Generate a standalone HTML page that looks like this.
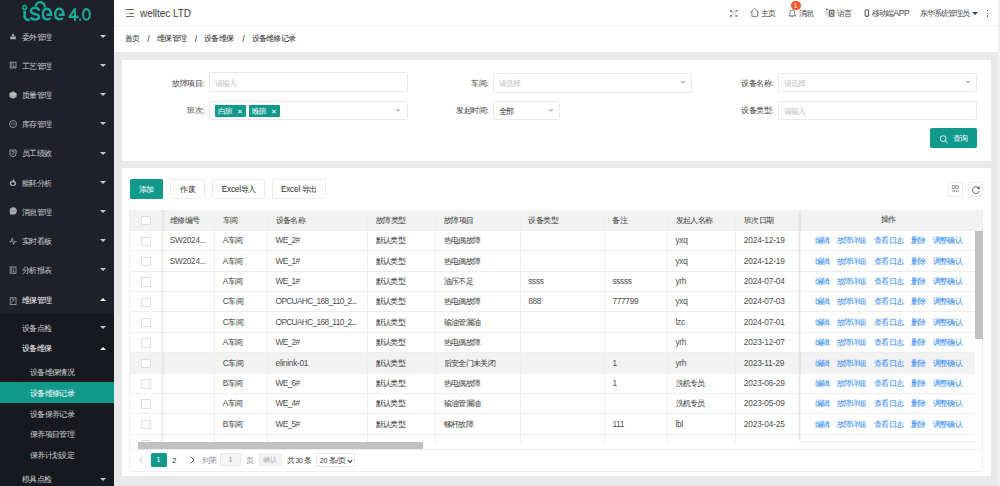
<!DOCTYPE html><html><head><meta charset="utf-8"><style>
*{margin:0;padding:0;box-sizing:border-box}
html,body{width:1000px;height:486px;overflow:hidden;background:#e9e9e9;font-family:"Liberation Sans",sans-serif;color:#606266;position:relative}
.ab{position:absolute;white-space:nowrap}
#side{position:absolute;left:0;top:0;width:114px;height:486px;background:#1e212a;overflow:hidden}
.mi{position:absolute;left:22.2px;font-size:8px;letter-spacing:-0.7px;color:#cdced1;line-height:10px;white-space:nowrap}
.arr{position:absolute;left:100px;width:0;height:0;border-left:3px solid transparent;border-right:3px solid transparent}
.arr.dn{border-top:3.5px solid #c8c9cc}
.arr.up{border-bottom:3.5px solid #fff}
#sub{position:absolute;left:0;top:314px;width:114px;height:172px;background:#18191f}
#header{position:absolute;left:114px;top:0;width:884px;height:26px;background:#fff;border-bottom:1px solid #f3f3f3;border-top-right-radius:3px}
#bread{position:absolute;left:114px;top:26px;width:884px;height:26px;background:#fff}
#rstrip{position:absolute;left:998px;top:0;width:2px;height:486px;background:#efefef}
.card{position:absolute;left:122px;width:868.6px;background:#fff}
.t7{font-size:8px;letter-spacing:-0.7px;line-height:10px}
.inp{position:absolute;height:20px;border:1px solid #e8e8e8;border-radius:1.5px;background:#fff}
.caret{position:absolute;width:0;height:0;border-left:3.5px solid transparent;border-right:3.5px solid transparent;border-top:3.5px solid #c0c4cc}
.tag{position:absolute;top:104.5px;height:12.5px;padding-top:1.2px;background:#11998b;color:#fff;font-size:8px;letter-spacing:-0.7px;line-height:12.5px;border-radius:1px}
.btn{position:absolute;top:179px;height:20px;border:1px solid #ebebeb;border-radius:1.5px;background:#fff;font-size:8px;letter-spacing:-0.7px;color:#303133;line-height:19.5px;text-align:center}
.hl{position:absolute;background:#ebeef5}
.link{color:#2d88f2}
</style></head><body>
<div id="side">
<div id="sub"></div>
<svg class="ab" style="left:0;top:0" width="114" height="24" viewBox="0 0 114 24">
<g fill="none" stroke="#1aaa98" stroke-linecap="butt">
<circle cx="24.7" cy="7.4" r="1.9" stroke-width="1.4"/>
<path d="M24.6 10.4 V16.3 Q24.6 20.1 29.8 20.2" stroke-width="2.6"/>
<path d="M39.2 10.8 C38.8 8.8 37 7.7 35 7.7 C32.6 7.7 30.9 9.1 30.9 11 C30.9 13 33 13.5 35 14 C37.5 14.6 39.1 15.3 39.1 17 C39.1 18.7 37.2 19.5 35 19.5 C33 19.5 31.2 18.7 30.6 17.3" stroke-width="2.45"/>
<path d="M35.6 6.2 A4.5 4.5 0 0 1 44.8 7.4" stroke-width="2.45"/>
<path d="M46.4 14.8 H51.1 C51.1 11 49.5 8.8 46.9 8.8 C44.3 8.8 42.9 11.2 42.9 14.1 C42.9 17.2 44.5 19.4 47.2 19.4 C48.6 19.4 49.7 18.9 50.5 18" stroke-width="2.4"/>
<path d="M58.7 14.8 H63.5 C63.5 11 61.9 8.8 59.3 8.8 C56.7 8.8 55.2 11.2 55.2 14.1 C55.2 17.2 56.8 19.4 59.5 19.4 C60.9 19.4 62 18.9 62.8 18" stroke-width="2.4"/>
<path d="M75 8.3 V20.8 M75 8.8 L69.6 16.5 V16.9 H78.6" stroke-width="2.1"/>
<ellipse cx="86.45" cy="14.45" rx="3.35" ry="5.35" stroke-width="2.1"/>
</g>
<circle cx="80.1" cy="19.7" r="1.15" fill="#1aaa98"/>
</svg>
<div class="mi" style="top:32.6px">委外管理</div>
<div class="arr dn" style="top:34.8px"></div>
<svg class="ab" style="left:9px;top:32.3px" width="8" height="8" viewBox="0 0 8 8"><path d="M1.2 7.3 V4.8 L2.4 4.2 L4 1 L5.6 4 L6.9 4.6 V7.3 Z" fill="#a9aaae"/><circle cx="3.1" cy="4.4" r="0.55" fill="#1e212a"/><circle cx="5.2" cy="4.6" r="0.55" fill="#1e212a"/></svg>
<div class="mi" style="top:61.7px">工艺管理</div>
<div class="arr dn" style="top:63.9px"></div>
<svg class="ab" style="left:9px;top:61.4px" width="8" height="8" viewBox="0 0 8 8"><rect x="1.2" y="1.2" width="5.8" height="5.8" fill="none" stroke="#a9aaae" stroke-width="0.8"/><path d="M2.7 1.5 V6.6 M4.3 1.5 V5.5" stroke="#a9aaae" stroke-width="0.6"/><rect x="4.4" y="5" width="1.3" height="1.3" fill="#a9aaae"/></svg>
<div class="mi" style="top:90.9px">质量管理</div>
<div class="arr dn" style="top:93.1px"></div>
<svg class="ab" style="left:9px;top:90.6px" width="8" height="8" viewBox="0 0 8 8"><path d="M4 0.3 L7.6 2.2 V6 L4 7.8 L0.4 6 V2.2 Z" fill="#a9aaae"/><path d="M0.6 2.4 L4 4.2 L7.4 2.4" fill="none" stroke="#fff" stroke-width="0.6" opacity="0.9"/></svg>
<div class="mi" style="top:120.1px">库存管理</div>
<div class="arr dn" style="top:122.3px"></div>
<svg class="ab" style="left:9px;top:119.8px" width="8" height="8" viewBox="0 0 8 8"><circle cx="4" cy="4" r="3.5" fill="none" stroke="#a9aaae" stroke-width="0.8"/><path d="M2 4.4 L3.3 3.2 L4.6 4.6 L6 3.4" fill="none" stroke="#a9aaae" stroke-width="0.8"/></svg>
<div class="mi" style="top:149.3px">员工绩效</div>
<div class="arr dn" style="top:151.5px"></div>
<svg class="ab" style="left:9px;top:149.0px" width="8" height="8" viewBox="0 0 8 8"><path d="M1 1 H7 V4.8 Q7 7 4 7.8 Q1 7 1 4.8 Z" fill="none" stroke="#a9aaae" stroke-width="0.9"/><path d="M2.6 4.3 L3.7 5.3 L5.5 3.2" fill="none" stroke="#a9aaae" stroke-width="0.8"/><path d="M2.5 2.6 H5.5" stroke="#a9aaae" stroke-width="0.7"/></svg>
<div class="mi" style="top:178.5px">能耗分析</div>
<div class="arr dn" style="top:180.7px"></div>
<svg class="ab" style="left:9px;top:178.2px" width="8" height="8" viewBox="0 0 8 8"><path d="M4.2 0.4 Q4.3 1.8 5.3 2.5 Q7.2 3.8 7.2 5.5 Q7.2 7.9 4 7.9 Q0.8 7.9 0.8 5.5 Q0.8 3.6 2.2 2.6 Q2.4 3.8 3.1 3.4 Q3.6 1.9 4.2 0.4 Z" fill="#a9aaae"/><ellipse cx="4" cy="5.6" rx="1.7" ry="1.4" fill="#1e212a"/></svg>
<div class="mi" style="top:207.7px">消息管理</div>
<div class="arr dn" style="top:209.9px"></div>
<svg class="ab" style="left:9px;top:207.4px" width="8" height="8" viewBox="0 0 8 8"><circle cx="4.2" cy="3.9" r="3.6" fill="#a9aaae"/><path d="M1.3 5.6 L0.8 7.7 L3 6.9 Z" fill="#a9aaae"/><circle cx="2.6" cy="3.9" r="0.45" fill="#55565b"/><circle cx="4.2" cy="3.9" r="0.45" fill="#55565b"/><circle cx="5.8" cy="3.9" r="0.45" fill="#55565b"/></svg>
<div class="mi" style="top:236.9px">实时看板</div>
<div class="arr dn" style="top:239.1px"></div>
<svg class="ab" style="left:9px;top:236.6px" width="8" height="8" viewBox="0 0 8 8"><path d="M0.4 5 H2 L3.3 1.2 L4.6 7.4 L5.6 4.6 H7.6" fill="none" stroke="#a9aaae" stroke-width="0.85" stroke-linejoin="round"/></svg>
<div class="mi" style="top:266.1px">分析报表</div>
<div class="arr dn" style="top:268.3px"></div>
<svg class="ab" style="left:9px;top:265.8px" width="8" height="8" viewBox="0 0 8 8"><rect x="1.2" y="1" width="5.8" height="6.3" fill="none" stroke="#a9aaae" stroke-width="0.8"/><path d="M2.7 1.3 V6.9 M4.3 1.3 V5.7" stroke="#a9aaae" stroke-width="0.6"/><rect x="4.4" y="5.2" width="1.3" height="1.3" fill="#a9aaae"/></svg>
<div class="mi" style="top:295.8px;color:#fff">维保管理</div><div class="arr up" style="top:297.5px"></div>
<svg class="ab" style="left:9px;top:296.5px" width="8" height="8" viewBox="0 0 8 8"><rect x="1.2" y="0.8" width="5.8" height="6.6" fill="none" stroke="#a9aaae" stroke-width="0.8"/><path d="M2.7 2.3 H5.5 M2.5 6 L3 4.8 L5.2 3" stroke="#a9aaae" stroke-width="0.7" fill="none"/></svg>
<div class="mi" style="top:323.5px">设备点检</div><div class="arr dn" style="top:326.2px"></div>
<div class="mi" style="top:344.3px;color:#fff">设备维保</div><div class="arr up" style="top:346.5px"></div>
<div class="ab" style="left:0;top:382.4px;width:114px;height:20.6px;background:#11998b"></div>
<div class="mi" style="left:30px;top:367.8px;color:#cdced1">设备维保情况</div>
<div class="mi" style="left:30px;top:388.5px;color:#fff">设备维修记录</div>
<div class="mi" style="left:30px;top:409.5px;color:#cdced1">设备保养记录</div>
<div class="mi" style="left:30px;top:430.2px;color:#cdced1">保养项目管理</div>
<div class="mi" style="left:30px;top:451.0px;color:#cdced1">保养计划设定</div>
<div class="mi" style="top:475.1px">模具点检</div><div class="arr dn" style="top:477.8px"></div>
</div>
<div id="header"></div>
<div id="bread"></div>
<div id="rstrip"></div>
<div class="ab" style="left:125.5px;top:9px;width:8px;height:1.3px;background:#666"></div>
<div class="ab" style="left:125.5px;top:12.5px;width:1.5px;height:1.3px;background:#666"></div>
<div class="ab" style="left:128.5px;top:12.5px;width:5px;height:1.3px;background:#666"></div>
<div class="ab" style="left:125.5px;top:16px;width:8px;height:1.3px;background:#666"></div>
<div class="ab" style="left:140px;top:7.6px;font-size:10px;line-height:12px;color:#3a3a3a;letter-spacing:-0.05px">welltec LTD</div>
<svg class="ab" style="left:730px;top:9.5px" width="7.5" height="7" viewBox="0 0 7.5 7"><g stroke="#666" stroke-width="0.8" fill="none">
<path d="M0.6 0.6 L2.6 2.6 M0.6 2 V0.6 H2"/><path d="M6.9 0.6 L4.9 2.6 M6.9 2 V0.6 H5.5"/>
<path d="M0.6 6.4 L2.6 4.4 M0.6 5 V6.4 H2"/><path d="M6.9 6.4 L4.9 4.4 M6.9 5 V6.4 H5.5"/></g></svg>
<svg class="ab" style="left:749.8px;top:8.3px" width="9.5" height="9" viewBox="0 0 9.5 9"><path d="M0.5 4.6 L4.75 0.6 L9 4.6 M1.9 3.4 V8.4 H7.6 V3.4" fill="none" stroke="#555" stroke-width="0.75" stroke-linejoin="round"/></svg>
<div class="ab t7" style="left:761px;top:9.1px;color:#444">主页</div>
<svg class="ab" style="left:788.3px;top:9.3px" width="8.5" height="8.5" viewBox="0 0 8.5 8.5"><path d="M1.8 6.3 V3.8 Q1.8 1 4.25 1 Q6.7 1 6.7 3.8 V6.3 L7.8 6.9 H0.7 L1.8 6.3 M3.3 7.7 H5.2" fill="none" stroke="#555" stroke-width="0.75" stroke-linejoin="round"/></svg>
<div class="ab" style="left:791px;top:0.8px;width:9.6px;height:9.6px;border-radius:50%;background:#f5582a;color:#fff;font-size:7px;line-height:9.6px;text-align:center">1</div>
<div class="ab t7" style="left:798.6px;top:9.1px;color:#444">消息</div>
<svg class="ab" style="left:825px;top:8px" width="10" height="10" viewBox="0 0 10 10">
<rect x="0.5" y="1.5" width="4.8" height="6.5" fill="#e6e6e6"/>
<path d="M1.4 0.6 L3.2 1.6 L1.4 2.2 Z" fill="#222"/>
<rect x="4.7" y="2.2" width="4.2" height="6" fill="#fff" stroke="#333" stroke-width="0.9"/>
<path d="M5.9 6.9 L6.8 3.5 L7.7 6.9 M6.2 5.8 H7.4" stroke="#333" stroke-width="0.6" fill="none"/>
<path d="M2.2 3.5 V6.5" stroke="#aaa" stroke-width="0.7"/>
<path d="M1.6 8.6 Q3 9.8 4.6 9.3" stroke="#bbb" stroke-width="0.6" fill="none"/>
<path d="M7.2 0.8 Q8.4 0.8 8.8 1.6" stroke="#bbb" stroke-width="0.5" fill="none"/></svg>
<div class="ab t7" style="left:837px;top:9.1px;color:#444">语言</div>
<svg class="ab" style="left:863.5px;top:9px" width="6" height="8" viewBox="0 0 6 8"><rect x="1.2" y="0.9" width="3.4" height="6.4" rx="0.5" fill="none" stroke="#333" stroke-width="0.9"/><path d="M2.5 6.2 H3.3" stroke="#333" stroke-width="0.5"/></svg>
<div class="ab t7" style="left:871.5px;top:9.1px;color:#444">移动端<span style="font-size:8.3px;letter-spacing:-0.2px;line-height:0">APP</span></div>
<div class="ab t7" style="left:920.2px;top:9.1px;color:#444;letter-spacing:-0.95px">东华系统管理员</div>
<div class="ab" style="left:971.5px;top:11.8px;width:0;height:0;border-left:3px solid transparent;border-right:3px solid transparent;border-top:3px solid #444"></div>
<div class="ab" style="left:987px;top:9.8px;width:1.4px;height:1.4px;background:#666"></div><div class="ab" style="left:987px;top:12.5px;width:1.4px;height:1.4px;background:#666"></div><div class="ab" style="left:987px;top:15.2px;width:1.4px;height:1.4px;background:#666"></div>
<div class="ab t7" style="left:124.5px;top:33.8px;color:#2a2a2a;font-size:8px">首页</div>
<div class="ab t7" style="left:147.3px;top:33.8px;color:#2a2a2a;font-size:8.6px">/</div>
<div class="ab t7" style="left:157px;top:33.8px;color:#2a2a2a;font-size:8px">维保管理</div>
<div class="ab t7" style="left:194.7px;top:33.8px;color:#2a2a2a;font-size:8.6px">/</div>
<div class="ab t7" style="left:204px;top:33.8px;color:#2a2a2a;font-size:8px">设备维保</div>
<div class="ab t7" style="left:242.2px;top:33.8px;color:#2a2a2a;font-size:8.6px">/</div>
<div class="ab t7" style="left:251.5px;top:33.8px;color:#2a2a2a;font-size:8px">设备维修记录</div>
<div class="card" style="top:60px;height:101px"></div>
<div class="ab t7" style="right:796px;top:78.5px;color:#3c3c3c;font-size:8px;letter-spacing:-0.45px;text-align:right">故障项目:</div>
<div class="inp" style="left:209px;top:72.3px;width:198.5px;height:20.200000000000003px"></div>
<div class="ab t7" style="left:214.5px;top:78.9px;color:#bcbfc5">请输入</div>
<div class="ab t7" style="right:796px;top:106px;color:#3c3c3c;font-size:8px;letter-spacing:-0.45px;text-align:right">班次:</div>
<div class="inp" style="left:209px;top:101px;width:198.5px;height:18.799999999999997px"></div>
<div class="caret" style="left:395.0px;top:108.9px"></div>
<div class="tag" style="left:215px;width:31px;padding-left:3px">白班<span style="position:absolute;left:22px;font-size:7px">✕</span></div>
<div class="tag" style="left:249px;width:31px;padding-left:3px">晚班<span style="position:absolute;left:22px;font-size:7px">✕</span></div>
<div class="ab t7" style="right:511.7px;top:78.5px;color:#3c3c3c;font-size:8px;letter-spacing:-0.45px;text-align:right">车间:</div>
<div class="inp" style="left:493px;top:73px;width:199px;height:19.5px"></div>
<div class="ab t7" style="left:498.5px;top:79.25px;color:#bcbfc5">请选择</div>
<div class="caret" style="left:679.5px;top:81.25px"></div>
<div class="ab t7" style="right:511.7px;top:106px;color:#3c3c3c;font-size:8px;letter-spacing:-0.45px;text-align:right">发起时间:</div>
<div class="inp" style="left:493px;top:100.5px;width:67px;height:19.5px"></div>
<div class="ab t7" style="left:498.5px;top:106.75px;color:#303133">全部</div>
<div class="caret" style="left:547.5px;top:108.75px"></div>
<div class="ab t7" style="right:226.70000000000005px;top:78.5px;color:#3c3c3c;font-size:8px;letter-spacing:-0.45px;text-align:right">设备名称:</div>
<div class="inp" style="left:778px;top:73px;width:199px;height:19px"></div>
<div class="ab t7" style="left:783.5px;top:79.0px;color:#bcbfc5">请选择</div>
<div class="caret" style="left:964.5px;top:81.0px"></div>
<div class="ab t7" style="right:226.70000000000005px;top:106px;color:#3c3c3c;font-size:8px;letter-spacing:-0.45px;text-align:right">设备类型:</div>
<div class="inp" style="left:778px;top:100.5px;width:199px;height:19.5px"></div>
<div class="ab t7" style="left:783.5px;top:106.75px;color:#bcbfc5">请输入</div>
<div class="ab" style="left:930.3px;top:128.2px;width:46.7px;height:20px;background:#11998b;border-radius:2px"></div>
<svg class="ab" style="left:939px;top:134px" width="10" height="10" viewBox="0 0 10 10"><circle cx="4.2" cy="4.6" r="2.9" fill="none" stroke="#fff" stroke-width="0.85"/><path d="M6.3 6.8 L8.6 9" stroke="#fff" stroke-width="1"/></svg>
<div class="ab t7" style="left:952.6px;top:134.3px;color:#fff">查询</div>
<div class="card" style="top:168px;height:308.4px"></div>
<div class="ab" style="left:129.5px;top:179px;width:33.5px;height:20px;background:#11998b;border-radius:1.5px;color:#fff;font-size:8px;letter-spacing:-0.6px;line-height:21.5px;text-align:center">添加</div>
<div class="btn" style="left:170.3px;width:34.5px">作废</div>
<div class="btn" style="left:212.3px;width:52.5px"><span style="font-size:8.3px;line-height:0;letter-spacing:-0.25px">Excel</span>导入</div>
<div class="btn" style="left:271.8px;width:54px"><span style="font-size:8.3px;line-height:0;letter-spacing:-0.25px">Excel </span>导出</div>
<div class="ab" style="left:948.1px;top:182.1px;width:14.7px;height:14.7px;border:1px solid #ececec;border-radius:1px"></div>
<svg class="ab" style="left:951px;top:184.5px" width="9" height="9" viewBox="0 0 9 9"><rect x="1.2" y="0.8" width="2.8" height="2.8" fill="none" stroke="#777" stroke-width="0.7"/><rect x="4.8" y="0.8" width="2.8" height="2.8" fill="none" stroke="#777" stroke-width="0.7"/><path d="M1.8 5 V7.2 M3.4 5 V7.2 M5.4 5 V7.2 M7 5 V7.2" stroke="#777" stroke-width="0.7"/></svg>
<div class="ab" style="left:968.2px;top:182.1px;width:14.7px;height:14.7px;border:1px solid #ececec;border-radius:1px"></div>
<svg class="ab" style="left:970.5px;top:184.5px" width="10" height="10" viewBox="0 0 10 10"><path d="M8.1 3.6 A3.4 3.4 0 1 0 8.3 6" fill="none" stroke="#555" stroke-width="0.9"/><path d="M5.9 3.9 L8.7 3.9 L8.7 1.1 Z" fill="#555"/></svg>
<div class="ab" style="left:129.4px;top:210.0px;width:853.2px;height:20.5px;background:#f2f2f2"></div>
<div class="ab" style="left:129.4px;top:352.66px;width:845.1px;height:20.36px;background:#f2f2f2"></div>
<div class="ab" style="left:129.4px;top:210.0px;width:1px;height:261.2px;background:#eeeeee"></div>
<div class="ab" style="left:981.6px;top:210.0px;width:1px;height:261.2px;background:#eeeeee"></div>
<div class="ab" style="left:129.4px;top:210.0px;width:853.2px;height:1px;background:#eeeeee"></div>
<div class="ab" style="left:129.4px;top:230.00px;width:845.1px;height:1px;background:#eeeeee"></div>
<div class="ab" style="left:129.4px;top:250.36px;width:845.1px;height:1px;background:#eeeeee"></div>
<div class="ab" style="left:129.4px;top:270.72px;width:845.1px;height:1px;background:#eeeeee"></div>
<div class="ab" style="left:129.4px;top:291.08px;width:845.1px;height:1px;background:#eeeeee"></div>
<div class="ab" style="left:129.4px;top:311.44px;width:845.1px;height:1px;background:#eeeeee"></div>
<div class="ab" style="left:129.4px;top:331.80px;width:845.1px;height:1px;background:#eeeeee"></div>
<div class="ab" style="left:129.4px;top:352.16px;width:845.1px;height:1px;background:#eeeeee"></div>
<div class="ab" style="left:129.4px;top:372.52px;width:845.1px;height:1px;background:#eeeeee"></div>
<div class="ab" style="left:129.4px;top:392.88px;width:845.1px;height:1px;background:#eeeeee"></div>
<div class="ab" style="left:129.4px;top:413.24px;width:845.1px;height:1px;background:#eeeeee"></div>
<div class="ab" style="left:129.4px;top:433.60px;width:845.1px;height:1px;background:#eeeeee"></div>
<div class="ab" style="left:161.0px;top:210.0px;width:1px;height:231.5px;background:#eeeeee"></div>
<div class="ab" style="left:214.0px;top:210.0px;width:1px;height:231.5px;background:#eeeeee"></div>
<div class="ab" style="left:266.9px;top:210.0px;width:1px;height:231.5px;background:#eeeeee"></div>
<div class="ab" style="left:367.2px;top:210.0px;width:1px;height:231.5px;background:#eeeeee"></div>
<div class="ab" style="left:435.1px;top:210.0px;width:1px;height:231.5px;background:#eeeeee"></div>
<div class="ab" style="left:519.5px;top:210.0px;width:1px;height:231.5px;background:#eeeeee"></div>
<div class="ab" style="left:603.7px;top:210.0px;width:1px;height:231.5px;background:#eeeeee"></div>
<div class="ab" style="left:666.8px;top:210.0px;width:1px;height:231.5px;background:#eeeeee"></div>
<div class="ab" style="left:735.1px;top:210.0px;width:1px;height:231.5px;background:#eeeeee"></div>
<div class="ab" style="left:129.4px;top:449.2px;width:853.2px;height:22.5px;border:1px solid #eeeeee;border-top-color:#eeeeee"></div>
<div class="ab" style="left:161.5px;top:210px;width:4px;height:231.5px;background:linear-gradient(to right,rgba(0,0,0,0.05),rgba(0,0,0,0))"></div>
<div class="ab" style="left:798.8px;top:210.0px;width:1.5px;height:231.3px;background:#ececec"></div>
<div class="ab" style="left:800.8px;top:210.0px;width:173.8px;height:231.3px;background:#fff;box-shadow:-3px 0 3px -1px rgba(0,0,0,0.06)"></div>
<div class="ab" style="left:800.8px;top:210.0px;width:173.8px;height:20.5px;background:#f2f2f2"></div>
<div class="ab" style="left:800.8px;top:352.66px;width:173.8px;height:20.36px;background:#f2f2f2"></div>
<div class="ab" style="left:800.8px;top:230.00px;width:173.8px;height:1px;background:#eeeeee"></div>
<div class="ab" style="left:800.8px;top:250.36px;width:173.8px;height:1px;background:#eeeeee"></div>
<div class="ab" style="left:800.8px;top:270.72px;width:173.8px;height:1px;background:#eeeeee"></div>
<div class="ab" style="left:800.8px;top:291.08px;width:173.8px;height:1px;background:#eeeeee"></div>
<div class="ab" style="left:800.8px;top:311.44px;width:173.8px;height:1px;background:#eeeeee"></div>
<div class="ab" style="left:800.8px;top:331.80px;width:173.8px;height:1px;background:#eeeeee"></div>
<div class="ab" style="left:800.8px;top:352.16px;width:173.8px;height:1px;background:#eeeeee"></div>
<div class="ab" style="left:800.8px;top:372.52px;width:173.8px;height:1px;background:#eeeeee"></div>
<div class="ab" style="left:800.8px;top:392.88px;width:173.8px;height:1px;background:#eeeeee"></div>
<div class="ab" style="left:800.8px;top:413.24px;width:173.8px;height:1px;background:#eeeeee"></div>
<div class="ab" style="left:800.8px;top:433.60px;width:173.8px;height:1px;background:#eeeeee"></div>
<div class="ab" style="left:800.8px;top:441.3px;width:173.8px;height:3px;background:linear-gradient(to bottom,rgba(0,0,0,0.05),rgba(0,0,0,0))"></div>
<div class="ab" style="left:974.6px;top:230.5px;width:8px;height:108px;background:#c1c1c1"></div>
<div class="ab" style="left:138.2px;top:441.6px;width:285px;height:7.3px;background:#c1c1c1"></div>
<div class="ab t7" style="left:169.7px;top:215.75px;color:#3a3a3a;letter-spacing:-0.55px">维修编号</div>
<div class="ab t7" style="left:222.7px;top:215.75px;color:#3a3a3a;letter-spacing:-0.55px">车间</div>
<div class="ab t7" style="left:275.59999999999997px;top:215.75px;color:#3a3a3a;letter-spacing:-0.55px">设备名称</div>
<div class="ab t7" style="left:375.9px;top:215.75px;color:#3a3a3a;letter-spacing:-0.55px">故障类型</div>
<div class="ab t7" style="left:443.8px;top:215.75px;color:#3a3a3a;letter-spacing:-0.55px">故障项目</div>
<div class="ab t7" style="left:528.2px;top:215.75px;color:#3a3a3a;letter-spacing:-0.55px">设备类型</div>
<div class="ab t7" style="left:612.4000000000001px;top:215.75px;color:#3a3a3a;letter-spacing:-0.55px">备注</div>
<div class="ab t7" style="left:675.5px;top:215.75px;color:#3a3a3a;letter-spacing:-0.55px">发起人名称</div>
<div class="ab t7" style="left:743.8000000000001px;top:215.75px;color:#3a3a3a;letter-spacing:-0.55px">班次日期</div>
<div class="ab t7" style="left:881px;top:215.25px;color:#303133">操作</div>
<div class="ab" style="left:141px;top:215.50px;width:9.5px;height:9.5px;border:1px solid #dedede;border-radius:1px;background:#fff"></div>
<div class="ab" style="left:141px;top:236.50px;width:9.5px;height:9.5px;border:1px solid #dedede;border-radius:1px;background:#fff"></div>
<div class="ab t7" style="left:169.7px;top:236.38px;color:#333"><span style="font-size:8.3px;letter-spacing:-0.3px;line-height:0;color:#4d4d4d">SW2024...</span></div>
<div class="ab t7" style="left:222.7px;top:236.38px;color:#333"><span style="font-size:8.3px;letter-spacing:-0.3px;line-height:0;color:#4d4d4d">A</span>车间</div>
<div class="ab t7" style="left:275.59999999999997px;top:236.38px;color:#333"><span style="font-size:8.3px;letter-spacing:-0.65px;line-height:0;color:#4d4d4d">WE_2#</span></div>
<div class="ab t7" style="left:375.9px;top:236.38px;color:#333">默认类型</div>
<div class="ab t7" style="left:443.8px;top:236.38px;color:#333">热电偶故障</div>
<div class="ab t7" style="left:675.5px;top:236.38px;color:#333"><span style="font-size:8.3px;letter-spacing:-0.3px;line-height:0;color:#4d4d4d">yxq</span></div>
<div class="ab t7" style="left:743.8000000000001px;top:236.38px;color:#333"><span style="font-size:8.3px;letter-spacing:-0.15px;line-height:0;color:#4d4d4d">2024-12-19</span></div>
<div class="ab t7 link" style="left:814.5px;top:236.38px">编辑</div>
<div class="ab t7 link" style="left:836.6px;top:236.38px">故障详细</div>
<div class="ab t7 link" style="left:874px;top:236.38px">查看日志</div>
<div class="ab t7 link" style="left:910.8px;top:236.38px">删除</div>
<div class="ab t7 link" style="left:932.8px;top:236.38px">调整确认</div>
<div class="ab" style="left:141px;top:256.86px;width:9.5px;height:9.5px;border:1px solid #dedede;border-radius:1px;background:#fff"></div>
<div class="ab t7" style="left:169.7px;top:256.74px;color:#333"><span style="font-size:8.3px;letter-spacing:-0.3px;line-height:0;color:#4d4d4d">SW2024...</span></div>
<div class="ab t7" style="left:222.7px;top:256.74px;color:#333"><span style="font-size:8.3px;letter-spacing:-0.3px;line-height:0;color:#4d4d4d">A</span>车间</div>
<div class="ab t7" style="left:275.59999999999997px;top:256.74px;color:#333"><span style="font-size:8.3px;letter-spacing:-0.65px;line-height:0;color:#4d4d4d">WE_1#</span></div>
<div class="ab t7" style="left:375.9px;top:256.74px;color:#333">默认类型</div>
<div class="ab t7" style="left:443.8px;top:256.74px;color:#333">热电偶故障</div>
<div class="ab t7" style="left:675.5px;top:256.74px;color:#333"><span style="font-size:8.3px;letter-spacing:-0.3px;line-height:0;color:#4d4d4d">yxq</span></div>
<div class="ab t7" style="left:743.8000000000001px;top:256.74px;color:#333"><span style="font-size:8.3px;letter-spacing:-0.15px;line-height:0;color:#4d4d4d">2024-12-19</span></div>
<div class="ab t7 link" style="left:814.5px;top:256.74px">编辑</div>
<div class="ab t7 link" style="left:836.6px;top:256.74px">故障详细</div>
<div class="ab t7 link" style="left:874px;top:256.74px">查看日志</div>
<div class="ab t7 link" style="left:910.8px;top:256.74px">删除</div>
<div class="ab t7 link" style="left:932.8px;top:256.74px">调整确认</div>
<div class="ab" style="left:141px;top:277.22px;width:9.5px;height:9.5px;border:1px solid #dedede;border-radius:1px;background:#fff"></div>
<div class="ab t7" style="left:222.7px;top:277.10px;color:#333"><span style="font-size:8.3px;letter-spacing:-0.3px;line-height:0;color:#4d4d4d">A</span>车间</div>
<div class="ab t7" style="left:275.59999999999997px;top:277.10px;color:#333"><span style="font-size:8.3px;letter-spacing:-0.65px;line-height:0;color:#4d4d4d">WE_1#</span></div>
<div class="ab t7" style="left:375.9px;top:277.10px;color:#333">默认类型</div>
<div class="ab t7" style="left:443.8px;top:277.10px;color:#333">油压不足</div>
<div class="ab t7" style="left:528.2px;top:277.10px;color:#333"><span style="font-size:8.3px;letter-spacing:-0.3px;line-height:0;color:#4d4d4d">ssss</span></div>
<div class="ab t7" style="left:612.4000000000001px;top:277.10px;color:#333"><span style="font-size:8.3px;letter-spacing:-0.3px;line-height:0;color:#4d4d4d">sssss</span></div>
<div class="ab t7" style="left:675.5px;top:277.10px;color:#333"><span style="font-size:8.3px;letter-spacing:-0.3px;line-height:0;color:#4d4d4d">yrh</span></div>
<div class="ab t7" style="left:743.8000000000001px;top:277.10px;color:#333"><span style="font-size:8.3px;letter-spacing:-0.15px;line-height:0;color:#4d4d4d">2024-07-04</span></div>
<div class="ab t7 link" style="left:814.5px;top:277.10px">编辑</div>
<div class="ab t7 link" style="left:836.6px;top:277.10px">故障详细</div>
<div class="ab t7 link" style="left:874px;top:277.10px">查看日志</div>
<div class="ab t7 link" style="left:910.8px;top:277.10px">删除</div>
<div class="ab t7 link" style="left:932.8px;top:277.10px">调整确认</div>
<div class="ab" style="left:141px;top:297.58px;width:9.5px;height:9.5px;border:1px solid #dedede;border-radius:1px;background:#fff"></div>
<div class="ab t7" style="left:222.7px;top:297.46px;color:#333"><span style="font-size:8.3px;letter-spacing:-0.3px;line-height:0;color:#4d4d4d">C</span>车间</div>
<div class="ab t7" style="left:275.59999999999997px;top:297.46px;color:#333"><span style="font-size:8.3px;letter-spacing:-0.65px;line-height:0;color:#4d4d4d">OPCUAHC_168_110_2...</span></div>
<div class="ab t7" style="left:375.9px;top:297.46px;color:#333">默认类型</div>
<div class="ab t7" style="left:443.8px;top:297.46px;color:#333">热电偶故障</div>
<div class="ab t7" style="left:528.2px;top:297.46px;color:#333"><span style="font-size:8.3px;letter-spacing:-0.3px;line-height:0;color:#4d4d4d">888</span></div>
<div class="ab t7" style="left:612.4000000000001px;top:297.46px;color:#333"><span style="font-size:8.3px;letter-spacing:-0.3px;line-height:0;color:#4d4d4d">777799</span></div>
<div class="ab t7" style="left:675.5px;top:297.46px;color:#333"><span style="font-size:8.3px;letter-spacing:-0.3px;line-height:0;color:#4d4d4d">yxq</span></div>
<div class="ab t7" style="left:743.8000000000001px;top:297.46px;color:#333"><span style="font-size:8.3px;letter-spacing:-0.15px;line-height:0;color:#4d4d4d">2024-07-03</span></div>
<div class="ab t7 link" style="left:814.5px;top:297.46px">编辑</div>
<div class="ab t7 link" style="left:836.6px;top:297.46px">故障详细</div>
<div class="ab t7 link" style="left:874px;top:297.46px">查看日志</div>
<div class="ab t7 link" style="left:910.8px;top:297.46px">删除</div>
<div class="ab t7 link" style="left:932.8px;top:297.46px">调整确认</div>
<div class="ab" style="left:141px;top:317.94px;width:9.5px;height:9.5px;border:1px solid #dedede;border-radius:1px;background:#fff"></div>
<div class="ab t7" style="left:222.7px;top:317.82px;color:#333"><span style="font-size:8.3px;letter-spacing:-0.3px;line-height:0;color:#4d4d4d">C</span>车间</div>
<div class="ab t7" style="left:275.59999999999997px;top:317.82px;color:#333"><span style="font-size:8.3px;letter-spacing:-0.65px;line-height:0;color:#4d4d4d">OPCUAHC_168_110_2...</span></div>
<div class="ab t7" style="left:375.9px;top:317.82px;color:#333">默认类型</div>
<div class="ab t7" style="left:443.8px;top:317.82px;color:#333">输油管漏油</div>
<div class="ab t7" style="left:675.5px;top:317.82px;color:#333"><span style="font-size:8.3px;letter-spacing:-0.3px;line-height:0;color:#4d4d4d">lzc</span></div>
<div class="ab t7" style="left:743.8000000000001px;top:317.82px;color:#333"><span style="font-size:8.3px;letter-spacing:-0.15px;line-height:0;color:#4d4d4d">2024-07-01</span></div>
<div class="ab t7 link" style="left:814.5px;top:317.82px">编辑</div>
<div class="ab t7 link" style="left:836.6px;top:317.82px">故障详细</div>
<div class="ab t7 link" style="left:874px;top:317.82px">查看日志</div>
<div class="ab t7 link" style="left:910.8px;top:317.82px">删除</div>
<div class="ab t7 link" style="left:932.8px;top:317.82px">调整确认</div>
<div class="ab" style="left:141px;top:338.30px;width:9.5px;height:9.5px;border:1px solid #dedede;border-radius:1px;background:#fff"></div>
<div class="ab t7" style="left:222.7px;top:338.18px;color:#333"><span style="font-size:8.3px;letter-spacing:-0.3px;line-height:0;color:#4d4d4d">A</span>车间</div>
<div class="ab t7" style="left:275.59999999999997px;top:338.18px;color:#333"><span style="font-size:8.3px;letter-spacing:-0.65px;line-height:0;color:#4d4d4d">WE_2#</span></div>
<div class="ab t7" style="left:375.9px;top:338.18px;color:#333">默认类型</div>
<div class="ab t7" style="left:443.8px;top:338.18px;color:#333">热电偶故障</div>
<div class="ab t7" style="left:675.5px;top:338.18px;color:#333"><span style="font-size:8.3px;letter-spacing:-0.3px;line-height:0;color:#4d4d4d">yrh</span></div>
<div class="ab t7" style="left:743.8000000000001px;top:338.18px;color:#333"><span style="font-size:8.3px;letter-spacing:-0.15px;line-height:0;color:#4d4d4d">2023-12-07</span></div>
<div class="ab t7 link" style="left:814.5px;top:338.18px">编辑</div>
<div class="ab t7 link" style="left:836.6px;top:338.18px">故障详细</div>
<div class="ab t7 link" style="left:874px;top:338.18px">查看日志</div>
<div class="ab t7 link" style="left:910.8px;top:338.18px">删除</div>
<div class="ab t7 link" style="left:932.8px;top:338.18px">调整确认</div>
<div class="ab" style="left:141px;top:358.66px;width:9.5px;height:9.5px;border:1px solid #dedede;border-radius:1px;background:#fff"></div>
<div class="ab t7" style="left:222.7px;top:358.54px;color:#333"><span style="font-size:8.3px;letter-spacing:-0.3px;line-height:0;color:#4d4d4d">C</span>车间</div>
<div class="ab t7" style="left:275.59999999999997px;top:358.54px;color:#333"><span style="font-size:8.3px;letter-spacing:-0.3px;line-height:0;color:#4d4d4d">elinink-01</span></div>
<div class="ab t7" style="left:375.9px;top:358.54px;color:#333">默认类型</div>
<div class="ab t7" style="left:443.8px;top:358.54px;color:#333">后安全门未关闭</div>
<div class="ab t7" style="left:612.4000000000001px;top:358.54px;color:#333"><span style="font-size:8.3px;letter-spacing:-0.3px;line-height:0;color:#4d4d4d">1</span></div>
<div class="ab t7" style="left:675.5px;top:358.54px;color:#333"><span style="font-size:8.3px;letter-spacing:-0.3px;line-height:0;color:#4d4d4d">yrh</span></div>
<div class="ab t7" style="left:743.8000000000001px;top:358.54px;color:#333"><span style="font-size:8.3px;letter-spacing:-0.15px;line-height:0;color:#4d4d4d">2023-11-29</span></div>
<div class="ab t7 link" style="left:814.5px;top:358.54px">编辑</div>
<div class="ab t7 link" style="left:836.6px;top:358.54px">故障详细</div>
<div class="ab t7 link" style="left:874px;top:358.54px">查看日志</div>
<div class="ab t7 link" style="left:910.8px;top:358.54px">删除</div>
<div class="ab t7 link" style="left:932.8px;top:358.54px">调整确认</div>
<div class="ab" style="left:141px;top:379.02px;width:9.5px;height:9.5px;border:1px solid #dedede;border-radius:1px;background:#fff"></div>
<div class="ab t7" style="left:222.7px;top:378.90px;color:#333"><span style="font-size:8.3px;letter-spacing:-0.3px;line-height:0;color:#4d4d4d">B</span>车间</div>
<div class="ab t7" style="left:275.59999999999997px;top:378.90px;color:#333"><span style="font-size:8.3px;letter-spacing:-0.65px;line-height:0;color:#4d4d4d">WE_6#</span></div>
<div class="ab t7" style="left:375.9px;top:378.90px;color:#333">默认类型</div>
<div class="ab t7" style="left:443.8px;top:378.90px;color:#333">热电偶故障</div>
<div class="ab t7" style="left:612.4000000000001px;top:378.90px;color:#333"><span style="font-size:8.3px;letter-spacing:-0.3px;line-height:0;color:#4d4d4d">1</span></div>
<div class="ab t7" style="left:675.5px;top:378.90px;color:#333">洗机专员</div>
<div class="ab t7" style="left:743.8000000000001px;top:378.90px;color:#333"><span style="font-size:8.3px;letter-spacing:-0.15px;line-height:0;color:#4d4d4d">2023-06-29</span></div>
<div class="ab t7 link" style="left:814.5px;top:378.90px">编辑</div>
<div class="ab t7 link" style="left:836.6px;top:378.90px">故障详细</div>
<div class="ab t7 link" style="left:874px;top:378.90px">查看日志</div>
<div class="ab t7 link" style="left:910.8px;top:378.90px">删除</div>
<div class="ab t7 link" style="left:932.8px;top:378.90px">调整确认</div>
<div class="ab" style="left:141px;top:399.38px;width:9.5px;height:9.5px;border:1px solid #dedede;border-radius:1px;background:#fff"></div>
<div class="ab t7" style="left:222.7px;top:399.26px;color:#333"><span style="font-size:8.3px;letter-spacing:-0.3px;line-height:0;color:#4d4d4d">A</span>车间</div>
<div class="ab t7" style="left:275.59999999999997px;top:399.26px;color:#333"><span style="font-size:8.3px;letter-spacing:-0.65px;line-height:0;color:#4d4d4d">WE_4#</span></div>
<div class="ab t7" style="left:375.9px;top:399.26px;color:#333">默认类型</div>
<div class="ab t7" style="left:443.8px;top:399.26px;color:#333">输油管漏油</div>
<div class="ab t7" style="left:675.5px;top:399.26px;color:#333">洗机专员</div>
<div class="ab t7" style="left:743.8000000000001px;top:399.26px;color:#333"><span style="font-size:8.3px;letter-spacing:-0.15px;line-height:0;color:#4d4d4d">2023-05-09</span></div>
<div class="ab t7 link" style="left:814.5px;top:399.26px">编辑</div>
<div class="ab t7 link" style="left:836.6px;top:399.26px">故障详细</div>
<div class="ab t7 link" style="left:874px;top:399.26px">查看日志</div>
<div class="ab t7 link" style="left:910.8px;top:399.26px">删除</div>
<div class="ab t7 link" style="left:932.8px;top:399.26px">调整确认</div>
<div class="ab" style="left:141px;top:419.74px;width:9.5px;height:9.5px;border:1px solid #dedede;border-radius:1px;background:#fff"></div>
<div class="ab t7" style="left:222.7px;top:419.62px;color:#333"><span style="font-size:8.3px;letter-spacing:-0.3px;line-height:0;color:#4d4d4d">B</span>车间</div>
<div class="ab t7" style="left:275.59999999999997px;top:419.62px;color:#333"><span style="font-size:8.3px;letter-spacing:-0.65px;line-height:0;color:#4d4d4d">WE_5#</span></div>
<div class="ab t7" style="left:375.9px;top:419.62px;color:#333">默认类型</div>
<div class="ab t7" style="left:443.8px;top:419.62px;color:#333">螺杆故障</div>
<div class="ab t7" style="left:612.4000000000001px;top:419.62px;color:#333"><span style="font-size:8.3px;letter-spacing:-0.3px;line-height:0;color:#4d4d4d">111</span></div>
<div class="ab t7" style="left:675.5px;top:419.62px;color:#333"><span style="font-size:8.3px;letter-spacing:-0.3px;line-height:0;color:#4d4d4d">lbl</span></div>
<div class="ab t7" style="left:743.8000000000001px;top:419.62px;color:#333"><span style="font-size:8.3px;letter-spacing:-0.15px;line-height:0;color:#4d4d4d">2023-04-25</span></div>
<div class="ab t7 link" style="left:814.5px;top:419.62px">编辑</div>
<div class="ab t7 link" style="left:836.6px;top:419.62px">故障详细</div>
<div class="ab t7 link" style="left:874px;top:419.62px">查看日志</div>
<div class="ab t7 link" style="left:910.8px;top:419.62px">删除</div>
<div class="ab t7 link" style="left:932.8px;top:419.62px">调整确认</div>
<div class="ab" style="left:141px;top:440.10px;width:9.5px;height:9.5px;border:1px solid #dedede;border-radius:1px;background:#fff"></div>
<div class="ab" style="left:138.2px;top:441.6px;width:285px;height:7.3px;background:#c1c1c1"></div>
<div class="ab" style="left:129.9px;top:441.6px;width:8.3px;height:7.6px;background:#fff"></div>
<svg class="ab" style="left:139px;top:456px" width="5" height="8" viewBox="0 0 5 8"><path d="M4 0.7 L1 4 L4 7.3" fill="none" stroke="#c0c4cc" stroke-width="0.9"/></svg>
<div class="ab" style="left:150.5px;top:453px;width:16.2px;height:13.7px;background:#11998b;border-radius:1.5px;color:#fff;font-size:7.3px;line-height:14.5px;text-align:center">1</div>
<div class="ab t7" style="left:172px;top:456px;color:#303133">2</div>
<svg class="ab" style="left:190px;top:456px" width="5" height="8" viewBox="0 0 5 8"><path d="M1 0.7 L4 4 L1 7.3" fill="none" stroke="#303133" stroke-width="0.9"/></svg>
<div class="ab t7" style="left:202px;top:456px;color:#909399">到第</div>
<div class="ab" style="left:220.3px;top:453.2px;width:20.6px;height:13.3px;background:#f5f5f5;border:1px solid #e4e7ed;border-radius:1.5px;color:#909399;font-size:7.3px;line-height:12.5px;text-align:center">1</div>
<div class="ab t7" style="left:246px;top:456px;color:#909399">页</div>
<div class="ab" style="left:257.7px;top:453.2px;width:24px;height:13.3px;background:#f2f2f2;border-radius:1.5px;color:#a8abb2;font-size:7.3px;line-height:14.5px;text-align:center">确认</div>
<div class="ab t7" style="left:287px;top:456px;color:#303133">共</div><div class="ab t7" style="left:295.4px;top:456.3px;color:#303133;font-size:7px;letter-spacing:-0.3px">30</div><div class="ab t7" style="left:304.2px;top:456px;color:#303133">条</div>
<div class="ab" style="left:315.8px;top:453.2px;width:39px;height:13.5px;border:1px solid #e6e6e6;border-radius:1.5px"></div>
<div class="ab t7" style="left:319.8px;top:456.3px;color:#303133;font-size:7px;letter-spacing:-0.3px">20</div><div class="ab t7" style="left:329px;top:456px;color:#303133">条/页</div>
<svg class="ab" style="left:347.2px;top:458.5px" width="6" height="5" viewBox="0 0 6 5"><path d="M0.8 1 L3 3.5 L5.2 1" fill="none" stroke="#222" stroke-width="1.1"/></svg>
</body></html>
